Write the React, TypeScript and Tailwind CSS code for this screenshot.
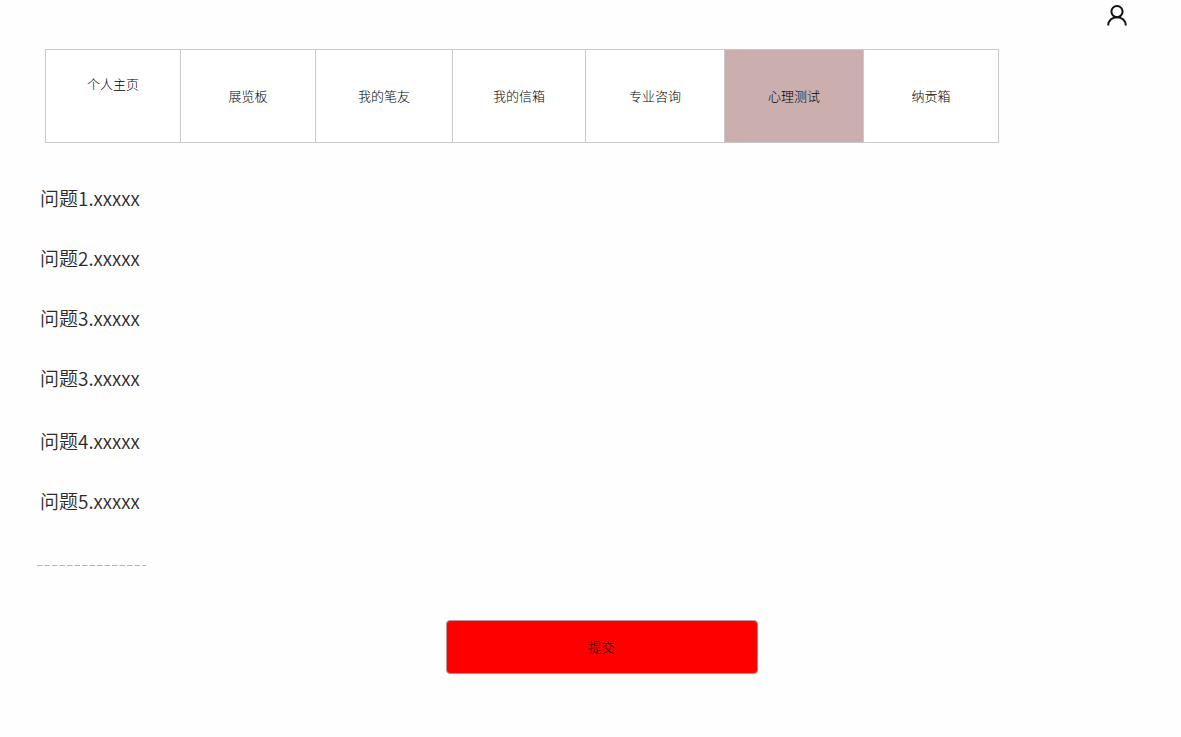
const tabs = ['个人主页', '展览板', '我的笔友', '我的信箱', '专业咨询', '心理测试', '纳贡箱'];

const questionGroups = [
  ['问题1.xxxxx', '问题2.xxxxx', '问题3.xxxxx', '问题3.xxxxx'],
  ['问题4.xxxxx', '问题5.xxxxx'],
];

function UserIcon() {
  return (
    <svg viewBox="0 0 20 22" className="h-[22px] w-5" fill="none" stroke="#111" strokeWidth="2" aria-hidden="true">
      <circle cx="10" cy="6.6" r="5.6" />
      <path d="M1.2 20.6 C1.2 15.6 5 12.3 10 12.3 C15 12.3 18.8 15.6 18.8 20.6" />
    </svg>
  );
}

export default function App() {
  return (
    <div className="min-h-screen bg-[#fefefe] font-['Noto_Sans_CJK_SC',sans-serif] font-light text-[#2b2b2b]">
      <header className="flex h-[49px] items-start justify-end pt-[5px] pr-[54px]">
        <button type="button" aria-label="个人主页">
          <UserIcon />
        </button>
      </header>

      <nav className="mx-[45px] grid h-[94px] max-w-[954px] grid-cols-[135fr_135fr_137fr_133fr_139fr_139fr_135fr] border-r border-[#c9c9c9] text-[13px] text-black">
        {tabs.map((tab, i) => (
          <a
            key={tab}
            href="#"
            className={`flex items-center justify-center border-y border-l border-[#c9c9c9] ${i === 0 ? 'pb-6' : ''} ${
              tab === '心理测试' ? 'bg-[#cbafaf]' : 'bg-white'
            }`}
          >
            {tab}
          </a>
        ))}
      </nav>

      <main>
        <div className="flex flex-col gap-[3px] px-10 pt-[25px]">
          {questionGroups.map((group, g) => (
            <ol key={g} className="text-[19px] font-[350]">
              {group.map((question, i) => (
                <li key={i} className="flex h-[60px] items-center">
                  {question}
                </li>
              ))}
            </ol>
          ))}
        </div>

        <svg className="mt-[34px] ml-[37px] block h-px w-[109px]" aria-hidden="true">
          <line x1="0" y1="0.5" x2="109" y2="0.5" stroke="#b4b4b4" strokeDasharray="5.6 1.9" />
        </svg>

        <div className="flex justify-center pt-[54px] pb-[60px] pl-[22px]">
          <button
            type="submit"
            className="h-[54px] w-[312px] rounded-[4px] border border-[#b99] bg-[#fe0000] text-[13px] text-black"
          >
            提交
          </button>
        </div>
      </main>
    </div>
  );
}
